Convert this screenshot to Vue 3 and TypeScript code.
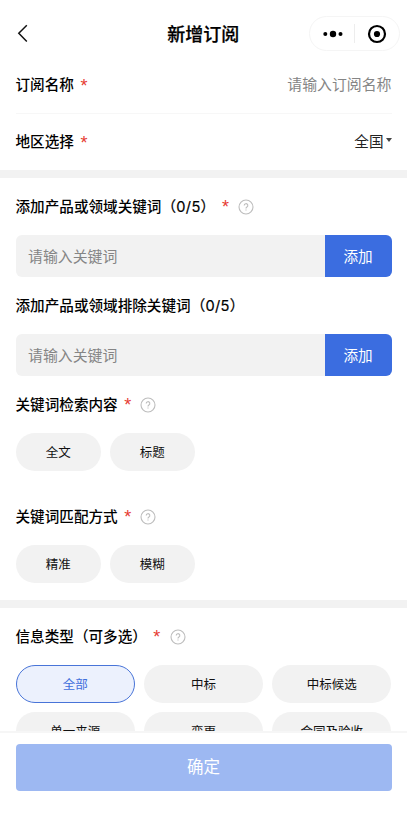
<script setup lang="ts">
import { ref } from 'vue'

interface KeywordField {
  label: string
  required: boolean
}
interface ChoiceGroup {
  label: string
  options: string[]
}

const keywordFields: KeywordField[] = [
  { label: '添加产品或领域关键词', required: true },
  { label: '添加产品或领域排除关键词', required: false },
]
const choiceGroups: ChoiceGroup[] = [
  { label: '关键词检索内容', options: ['全文', '标题'] },
  { label: '关键词匹配方式', options: ['精准', '模糊'] },
]
const infoTypes: string[] = ['全部', '中标', '中标候选', '单一来源', '变更', '合同及验收']
const selectedType = ref('全部')
</script>

<template>
  <div class="page">
    <header class="navbar">
      <svg class="back" width="12" height="20" viewBox="0 0 12 20">
        <path d="M10.8 1.3 2.8 9.3l8 8.2" fill="none" stroke="#111" stroke-width="1.5" />
      </svg>
      <h1 class="title">新增订阅</h1>
      <div class="capsule">
        <svg width="20" height="8" viewBox="0 0 20 8">
          <circle cx="2.3" cy="4" r="2" />
          <circle cx="10" cy="4" r="3.2" />
          <circle cx="17.5" cy="4" r="2" />
        </svg>
        <i class="capsule-line"></i>
        <svg width="20" height="20" viewBox="0 0 20 20">
          <circle cx="10" cy="10" r="8" fill="none" stroke="#000" stroke-width="2.2" />
          <circle cx="10" cy="10" r="3.1" />
        </svg>
      </div>
    </header>

    <main class="content">
      <section class="rows">
        <div class="row divided">
          <span class="label">订阅名称<b class="star">*</b></span>
          <span class="placeholder">请输入订阅名称</span>
        </div>
        <div class="row">
          <span class="label">地区选择<b class="star">*</b></span>
          <span class="region">全国<i class="caret"></i></span>
        </div>
      </section>

      <section class="block keywords">
        <template v-for="field in keywordFields" :key="field.label">
          <div class="label heading">
            {{ field.label }}<span class="count">（0/5）</span>
            <template v-if="field.required"><b class="star">*</b>
              <svg class="help" width="16" height="16" viewBox="0 0 16 16">
                <circle cx="8" cy="8" r="7" />
                <path d="M6.2 6.5a1.8 1.8 0 1 1 2.7 1.5c-.6.4-.9.7-.9 1.4M8 10.6v1" />
              </svg>
            </template>
          </div>
          <div class="entry">
            <span class="placeholder entry-text">请输入关键词</span>
            <button class="add">添加</button>
          </div>
        </template>
        <div v-for="group in choiceGroups" :key="group.label" class="group">
          <div class="label heading">
            {{ group.label }}<b class="star">*</b>
            <svg class="help" width="16" height="16" viewBox="0 0 16 16">
              <circle cx="8" cy="8" r="7" />
              <path d="M6.2 6.5a1.8 1.8 0 1 1 2.7 1.5c-.6.4-.9.7-.9 1.4M8 10.6v1" />
            </svg>
          </div>
          <div class="chips">
            <button v-for="option in group.options" :key="option" class="chip">{{ option }}</button>
          </div>
        </div>
      </section>

      <section class="block types">
        <div class="label heading">
          信息类型（可多选）<b class="star">*</b>
          <svg class="help" width="16" height="16" viewBox="0 0 16 16">
            <circle cx="8" cy="8" r="7" />
            <path d="M6.2 6.5a1.8 1.8 0 1 1 2.7 1.5c-.6.4-.9.7-.9 1.4M8 10.6v1" />
          </svg>
        </div>
        <div class="type-grid">
          <button
            v-for="type in infoTypes"
            :key="type"
            class="chip"
            :class="{ active: type === selectedType }"
            @click="selectedType = type"
          >{{ type }}</button>
        </div>
      </section>
    </main>

    <footer class="footer">
      <button class="confirm">确定</button>
    </footer>
  </div>
</template>

<style>
body {
  background: #fff;
}
</style>

<style scoped>
* {
  box-sizing: border-box;
}
.page {
  height: 822px;
  display: flex;
  flex-direction: column;
  overflow: hidden;
  background: #fff;
  color: #000;
  font-family: Inter, "Noto Sans CJK SC", sans-serif;
  font-size: 14.6px;
}
button {
  border: 0;
  padding: 0;
  font-family: inherit;
}
.navbar {
  flex: none;
  height: 57px;
  padding: 10px 7.5px 0 16px;
  display: grid;
  grid-template-columns: 92px 1fr 91px;
  align-items: center;
}
.title {
  margin: 0;
  padding: 2px 10px 0 0;
  text-align: center;
  font-size: 18px;
  line-height: 26px;
  font-weight: 500;
  -webkit-text-stroke: 0.25px #000;
}
.capsule {
  height: 35px;
  width: 91px;
  border: 1px solid #f5f5f5;
  border-radius: 18px;
  display: flex;
  align-items: center;
  justify-content: space-between;
  padding: 0 12px 0 13px;
}
.capsule-line {
  width: 1px;
  height: 19px;
  background: #ededed;
}
.content {
  flex: 1;
  min-height: 0;
  overflow: hidden;
}
.rows {
  height: 112.5px;
  padding: 0 15.5px;
}
.row {
  height: 56.5px;
  display: flex;
  align-items: center;
  justify-content: space-between;
}
.divided {
  border-bottom: 1px solid #f7f7f7;
}
.label {
  display: flex;
  align-items: center;
  font-weight: 500;
  line-height: 22px;
}
.row .label {
  padding-top: 1px;
}
.star {
  margin-left: 6.5px;
  color: #e63b32;
  font-family: "Liberation Sans", sans-serif;
  font-size: 18px;
  font-weight: 400;
  line-height: 18px;
  padding-top: 1px;
}
.placeholder {
  color: #858585;
  font-size: 14.9px;
  line-height: 22px;
}
.region {
  display: flex;
  align-items: center;
  color: #222;
  line-height: 20px;
}
.caret {
  margin: 0 0 3px 2px;
  border: 3px solid transparent;
  border-top: 4px solid #444;
  border-bottom: 0;
}
.block {
  border-top: 8px solid #f2f2f2;
  padding: 0 15.5px;
}
.keywords {
  height: 430.5px;
}
.heading {
  height: 56.5px;
  padding-top: 1px;
}
.count {
  font-weight: 400;
  letter-spacing: 0.3px;
  -webkit-text-stroke: 0.2px #000;
}
.help {
  margin-left: 9px;
  fill: none;
  stroke: #bdbdbd;
  stroke-width: 1.1;
}
.types .help {
  margin-left: 9.5px;
}
.entry {
  display: flex;
  height: 42.5px;
  border-radius: 6px;
  overflow: hidden;
  background: #f2f2f2;
}
.entry-text {
  flex: 1;
  padding-left: 12.5px;
  line-height: 44px;
}
.add {
  width: 67px;
  padding-bottom: 1px;
  background: #3b6de0;
  color: #fff;
  font-size: 14.6px;
}
.keywords .heading {
  height: 57px;
  padding-top: 1px;
}
.keywords .entry + .heading {
  height: 56.5px;
}
.group {
  height: 112px;
}
.group .heading {
  height: 56.5px;
}
.chips {
  display: flex;
  gap: 8.5px;
}
.chip {
  height: 38.5px;
  border-radius: 20px;
  background: #f2f2f2;
  color: #111;
  font-size: 12.5px;
}
.chips .chip {
  width: 85.5px;
}
.type-grid {
  display: grid;
  grid-template-columns: repeat(3, 1fr);
  gap: 8.5px;
}
.chip.active {
  border: 1px solid #4874d8;
  background: #ecf1fd;
  color: #3f6fdc;
}
.footer {
  flex: none;
  height: 91px;
  padding: 11px 15.5px 0;
  border-top: 2px solid #f6f6f6;
}
.confirm {
  display: block;
  width: 100%;
  height: 47px;
  padding-bottom: 3px;
  border-radius: 4px;
  background: #9db8f2;
  color: #fff;
  font-size: 16.5px;
}
</style>
